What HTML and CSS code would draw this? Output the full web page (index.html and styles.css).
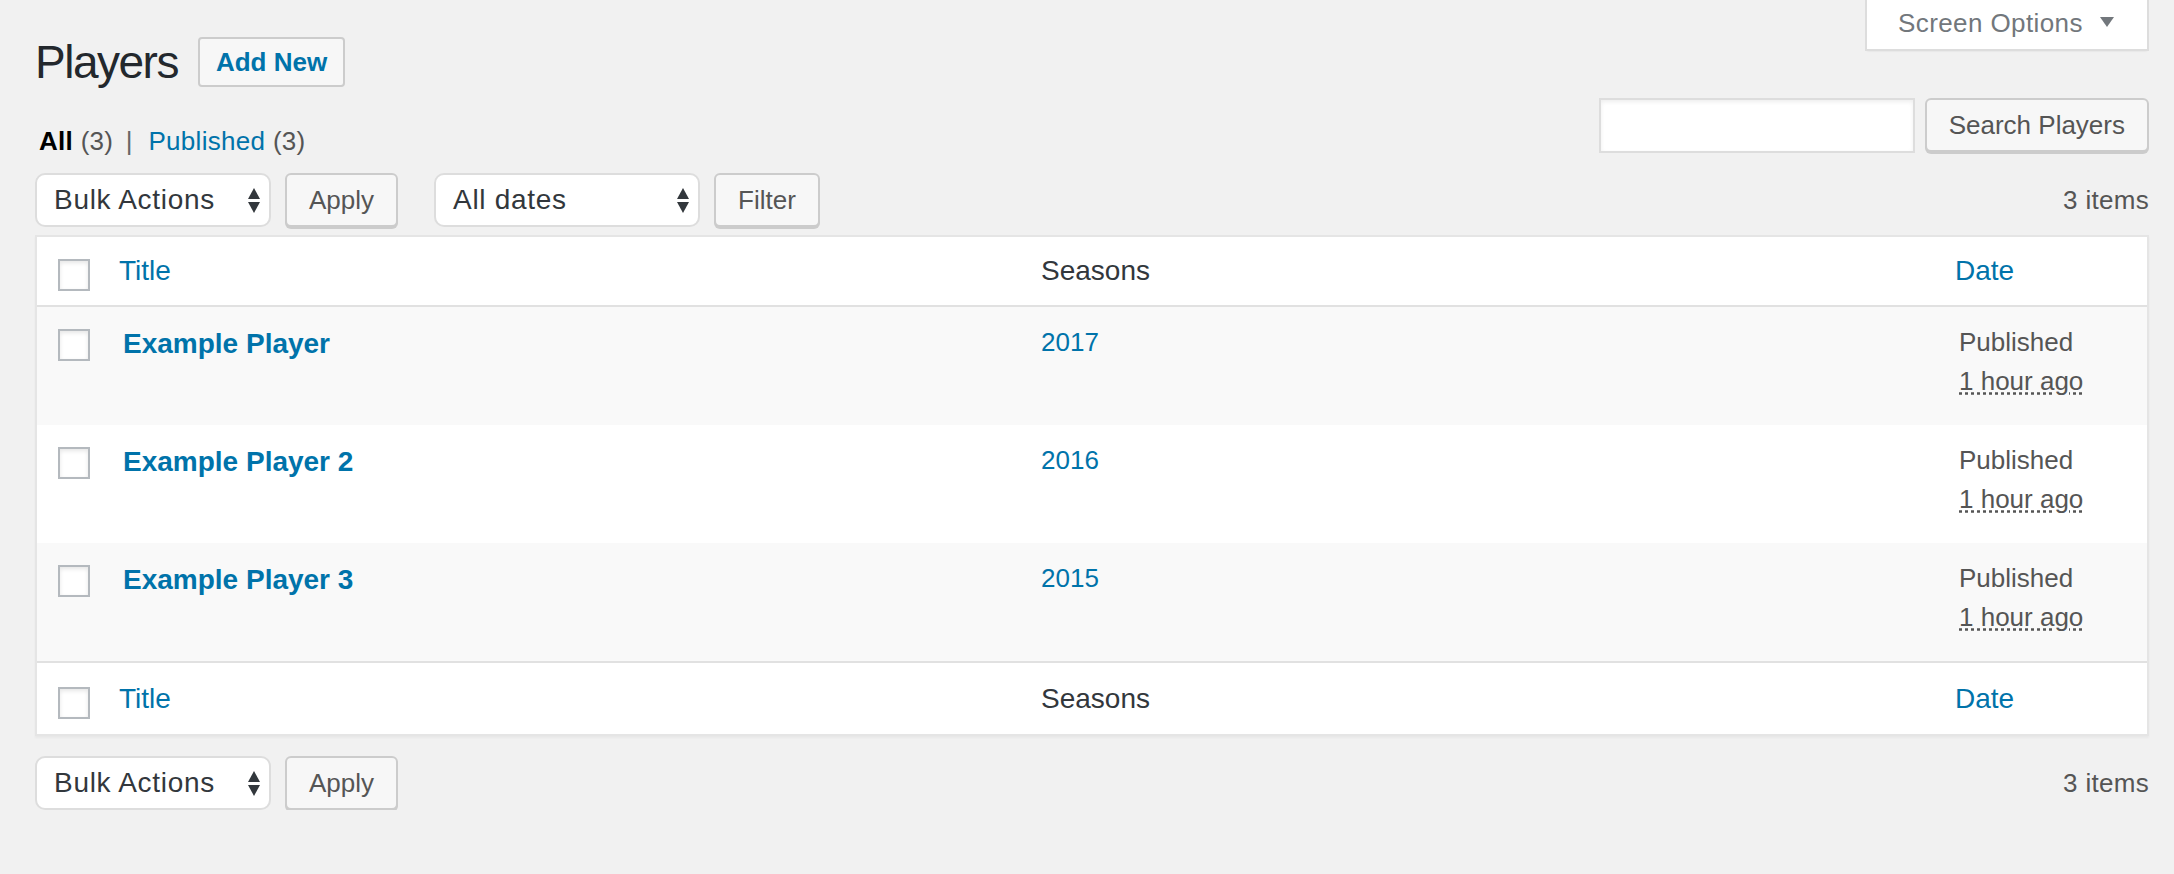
FILE: index.html
```html
<!DOCTYPE html>
<html>
    <head>
        <meta charset="utf-8">
        <title>Players</title>
        <link rel="stylesheet" href="styles.css">
    </head>
    <body>
        <div class="wrap">
            <div class="top-bar">
                <div class="page-head">
                    <h1>Players</h1>
                    <a class="page-title-action" href="#">Add New</a>
                </div>
                <div class="screen-meta-toggle">
                    <span>Screen Options</span>
                    <svg class="toggle-arrow" width="14" height="10" viewBox="0 0 14 10"><polygon points="0,0 14,0 7,10" fill="#72777c"/></svg>
                </div>
            </div>

            <div class="filter-bar">
                <ul class="subsubsub">
                    <li><a class="current" href="#">All <span class="count">(3)</span></a> |</li>
                    <li><a href="#">Published <span class="count">(3)</span></a></li>
                </ul>
                <p class="search-box">
                    <input type="search">
                    <button class="button">Search Players</button>
                </p>
            </div>

            <div class="tablenav top">
                <div class="actions">
                    <div class="select bulk">
                        <span>Bulk Actions</span>
                        <svg width="12" height="25" viewBox="0 0 12 25"><polygon points="0,11 6,0 12,11" fill="#32373c"/><polygon points="0,14 12,14 6,25" fill="#32373c"/></svg>
                    </div>
                    <button class="button">Apply</button>
                </div>
                <div class="actions">
                    <div class="select dates">
                        <span>All dates</span>
                        <svg width="12" height="25" viewBox="0 0 12 25"><polygon points="0,11 6,0 12,11" fill="#32373c"/><polygon points="0,14 12,14 6,25" fill="#32373c"/></svg>
                    </div>
                    <button class="button">Filter</button>
                </div>
                <span class="displaying-num">3 items</span>
            </div>

            <table class="widefat">
                <colgroup>
                    <col class="col-cb">
                    <col>
                    <col>
                    <col class="col-date">
                </colgroup>
                <thead>
                    <tr>
                        <th class="check-column"><input class="cb" type="checkbox"></th>
                        <th class="sortable"><a href="#">Title</a></th>
                        <th>Seasons</th>
                        <th class="sortable"><a href="#">Date</a></th>
                    </tr>
                </thead>
                <tbody>
                    <tr>
                        <td class="check-column"><input class="cb" type="checkbox"></td>
                        <td><a class="row-title" href="#">Example Player</a></td>
                        <td><a href="#">2017</a></td>
                        <td>Published<br><abbr title="2017/06/12 10:04:12 am">1 hour ago</abbr></td>
                    </tr>
                    <tr>
                        <td class="check-column"><input class="cb" type="checkbox"></td>
                        <td><a class="row-title" href="#">Example Player 2</a></td>
                        <td><a href="#">2016</a></td>
                        <td>Published<br><abbr title="2017/06/12 10:04:31 am">1 hour ago</abbr></td>
                    </tr>
                    <tr>
                        <td class="check-column"><input class="cb" type="checkbox"></td>
                        <td><a class="row-title" href="#">Example Player 3</a></td>
                        <td><a href="#">2015</a></td>
                        <td>Published<br><abbr title="2017/06/12 10:04:50 am">1 hour ago</abbr></td>
                    </tr>
                </tbody>
                <tfoot>
                    <tr>
                        <th class="check-column"><input class="cb" type="checkbox"></th>
                        <th class="sortable"><a href="#">Title</a></th>
                        <th>Seasons</th>
                        <th class="sortable"><a href="#">Date</a></th>
                    </tr>
                </tfoot>
            </table>

            <div class="tablenav bottom">
                <div class="actions">
                    <div class="select bulk">
                        <span>Bulk Actions</span>
                        <svg width="12" height="25" viewBox="0 0 12 25"><polygon points="0,11 6,0 12,11" fill="#32373c"/><polygon points="0,14 12,14 6,25" fill="#32373c"/></svg>
                    </div>
                    <button class="button">Apply</button>
                </div>
                <span class="displaying-num">3 items</span>
            </div>
        </div>
    </body>
</html>
```

FILE: styles.css
```css
body{
    margin: 0;
    background: #f1f1f1;
    color: #444;
    font-family: "Liberation Sans", Arial, sans-serif;
    font-size: 26px;
}

.wrap{
    padding: 0 25px 0 35px;
}

/* header */
.top-bar{
    display: flex;
    justify-content: space-between;
    align-items: flex-start;
    height: 98px;
}
.page-head{
    display: flex;
    align-items: center;
    gap: 20px;
    margin-top: 33px;
}
.page-head h1{
    margin: 0;
    font-size: 46px;
    font-weight: 400;
    line-height: 58px;
    letter-spacing: -1.5px;
    color: #23282d;
}
.page-title-action{
    padding: 8px 16px;
    border: 2px solid #ccc;
    border-radius: 4px;
    background: #f7f7f7;
    color: #0073aa;
    font-size: 26px;
    font-weight: 700;
    line-height: 30px;
    text-decoration: none;
}
.screen-meta-toggle{
    display: flex;
    justify-content: space-between;
    align-items: flex-start;
    box-sizing: border-box;
    width: 284px;
    height: 51px;
    padding: 0 33px 0 31px;
    border: 2px solid #ddd;
    border-top: none;
    background: #fff;
    box-shadow: 0 2px 2px -2px rgba(0,0,0,.1);
    color: #72777c;
    line-height: 46px;
    letter-spacing: 0.4px;
}
.toggle-arrow{
    margin-top: 17px;
}

/* views + search */
.filter-bar{
    display: flex;
    justify-content: space-between;
    align-items: flex-start;
    height: 75px;
}
.subsubsub{
    list-style: none;
    margin: 17px 0 0;
    padding: 0;
    color: #666;
    line-height: 52px;
    letter-spacing: 0.3px;
}
.subsubsub li{
    display: inline-block;
}
.subsubsub li + li{
    margin-left: 3px;
}
.subsubsub a{
    padding: 0 5px 0 4px;
    color: #0073aa;
    text-decoration: none;
}
.subsubsub li + li a{
    padding-left: 5px;
}
.subsubsub a.current{
    color: #000;
    font-weight: 700;
}
.subsubsub .count{
    color: #555;
    font-weight: 400;
}
.search-box{
    display: flex;
    gap: 10px;
    margin: 0;
}
.search-box input{
    box-sizing: border-box;
    width: 316px;
    height: 55px;
    margin: 0;
    padding: 0 10px;
    border: 2px solid #ddd;
    background: #fff;
    box-shadow: inset 0 2px 4px rgba(0,0,0,.07);
}

.button{
    box-sizing: border-box;
    height: 54px;
    margin: 0;
    padding: 0 22px;
    border: 2px solid #ccc;
    border-radius: 6px;
    background: #f7f7f7;
    box-shadow: 0 2px 0 #ccc;
    color: #555;
    font-family: inherit;
    font-size: 26px;
    line-height: 50px;
}

/* table nav */
.tablenav{
    display: flex;
    align-items: flex-start;
    height: 54px;
}
.tablenav.top{
    margin-bottom: 8px;
}
.tablenav.bottom{
    margin-top: 20px;
}
.actions{
    display: flex;
    gap: 14px;
    margin-right: 36px;
}
.select{
    display: flex;
    align-items: center;
    justify-content: space-between;
    box-sizing: border-box;
    height: 54px;
    padding: 0 9px 0 17px;
    border: 2px solid #ddd;
    border-radius: 10px;
    background: #fff;
    color: #32373c;
    font-size: 28px;
    letter-spacing: 0.7px;
}
.select.bulk{
    width: 236px;
}
.select.dates{
    width: 266px;
}
.displaying-num{
    margin-left: auto;
    line-height: 54px;
    color: #555;
    letter-spacing: 0.3px;
}

/* list table */
.widefat{
    width: 100%;
    table-layout: fixed;
    border-spacing: 0;
    border: 2px solid #e5e5e5;
    background: #fff;
    box-shadow: 0 2px 2px rgba(0,0,0,.04);
}
.col-cb{
    width: 66px;
}
.col-date{
    width: 208px;
}
.widefat th, .widefat td{
    text-align: left;
    vertical-align: top;
}
.widefat thead th, .widefat tfoot th{
    padding: 16px 20px;
    font-size: 28px;
    font-weight: 400;
    line-height: 36px;
    color: #32373c;
}
.widefat thead th{
    border-bottom: 2px solid #e1e1e1;
}
.widefat tfoot th{
    padding-top: 18px;
    padding-bottom: 17px;
    border-top: 2px solid #e1e1e1;
}
.widefat th.sortable{
    padding-left: 16px;
}
.widefat a{
    color: #0073aa;
    text-decoration: none;
}
.widefat tbody td{
    padding: 16px 20px 24px;
    line-height: 39px;
    color: #555;
}
.widefat tbody tr:nth-child(odd){
    background: #f9f9f9;
}
.widefat th.check-column{
    padding: 22px 0 0 21px;
}
.widefat tfoot th.check-column{
    padding-top: 24px;
}
.widefat td.check-column{
    padding: 22px 0 0 21px;
}
.row-title{
    font-size: 28px;
    font-weight: 700;
    line-height: 42px;
}
.widefat abbr{
    text-decoration: underline dotted;
}
.cb{
    appearance: none;
    display: block;
    box-sizing: border-box;
    width: 32px;
    height: 32px;
    margin: 0;
    border: 2px solid #b4b9be;
    background: #fff;
    box-shadow: inset 0 2px 4px rgba(0,0,0,.1);
}
```
